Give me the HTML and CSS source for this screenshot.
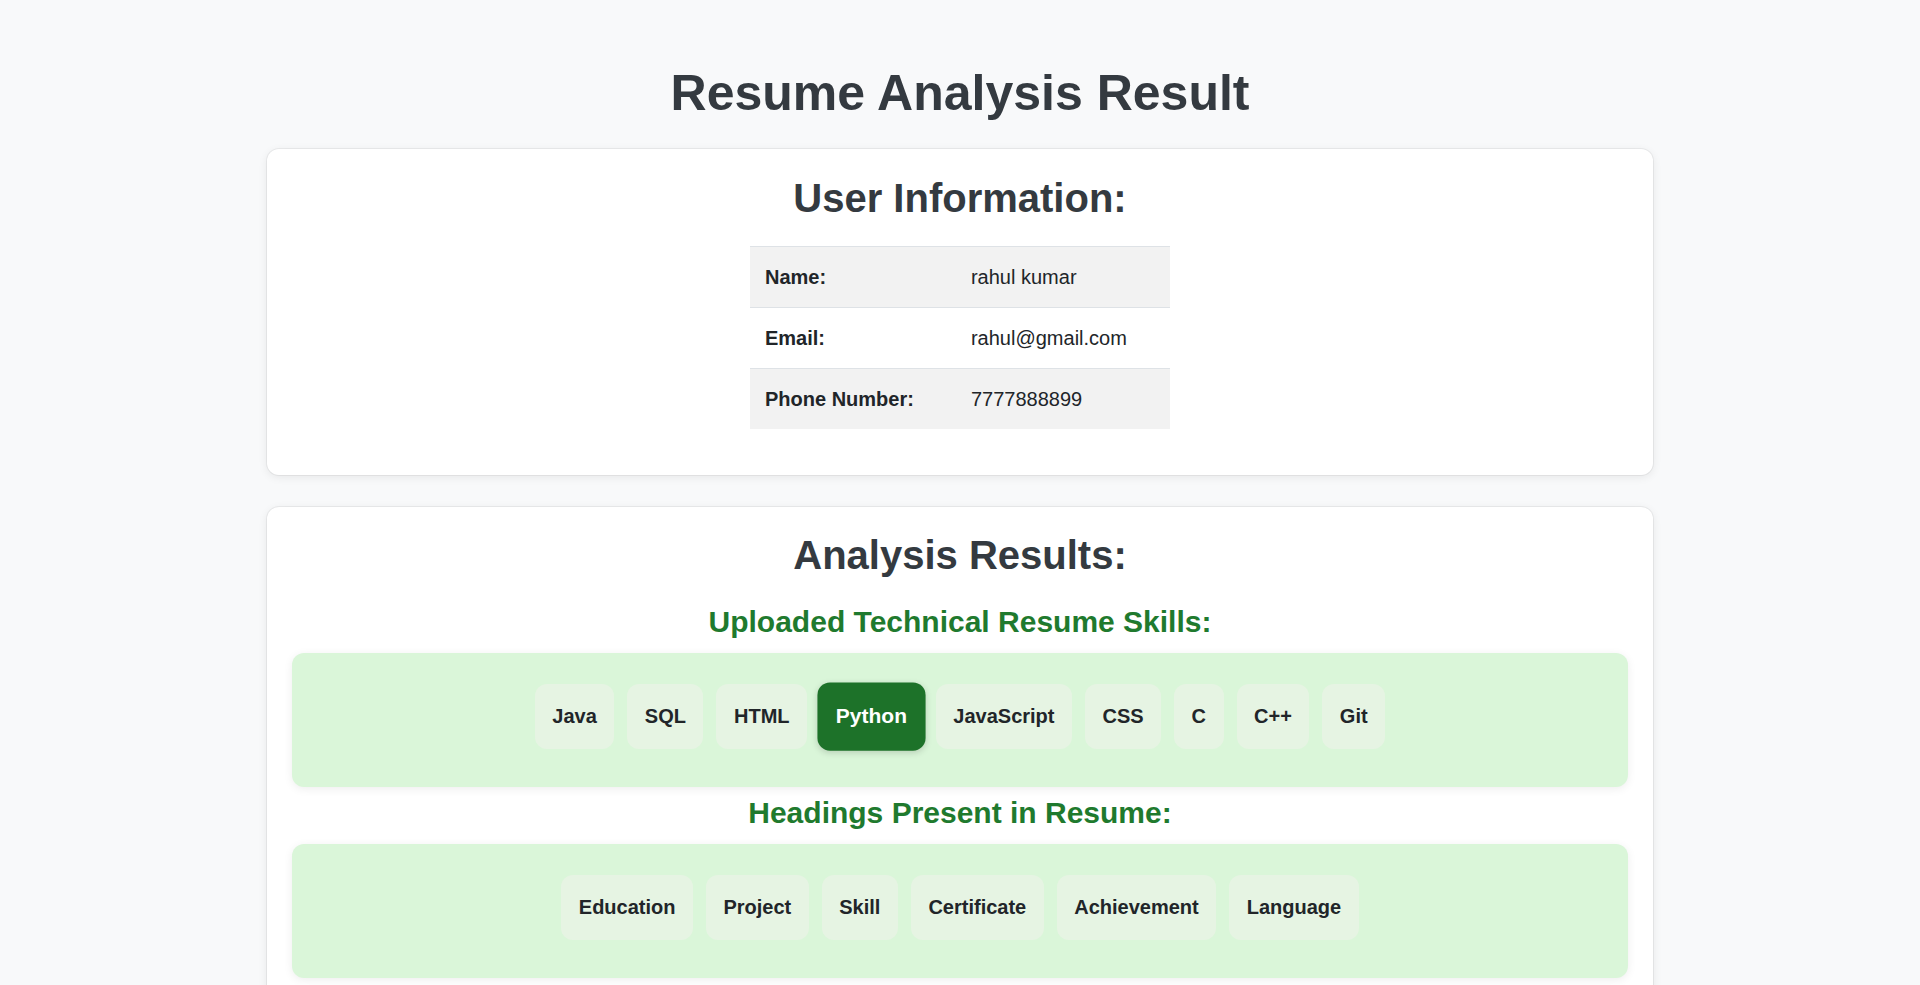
FILE: index.html
```html
<!DOCTYPE html>
<html lang="en">
<head>
<meta charset="utf-8">
<title>Resume Analysis Result</title>
<link rel="stylesheet" href="styles.css">
</head>
<body>
  <h1 class="page-title">Resume Analysis Result</h1>

  <section class="card card-user">
    <h2 class="card-title">User Information:</h2>
    <table class="info-table">
      <tbody>
        <tr class="row-shaded"><th>Name:</th><td>rahul kumar</td></tr>
        <tr><th>Email:</th><td>rahul@gmail.com</td></tr>
        <tr class="row-shaded"><th>Phone Number:</th><td>7777888899</td></tr>
      </tbody>
    </table>
  </section>

  <section class="card card-analysis">
    <h2 class="card-title">Analysis Results:</h2>
    <h3 class="section-title section-first">Uploaded Technical Resume Skills:</h3>
    <div class="chip-box">
      <span class="chip">Java</span>
      <span class="chip">SQL</span>
      <span class="chip">HTML</span>
      <span class="chip chip-active">Python</span>
      <span class="chip">JavaScript</span>
      <span class="chip">CSS</span>
      <span class="chip">C</span>
      <span class="chip">C++</span>
      <span class="chip">Git</span>
    </div>
    <h3 class="section-title">Headings Present in Resume:</h3>
    <div class="chip-box">
      <span class="chip">Education</span>
      <span class="chip">Project</span>
      <span class="chip">Skill</span>
      <span class="chip">Certificate</span>
      <span class="chip">Achievement</span>
      <span class="chip">Language</span>
    </div>
  </section>
</body>
</html>
```
FILE: styles.css
```css
* {
  box-sizing: border-box;
}

body {
  margin: 0;
  background: #f8f9fa;
  font-family: "Liberation Sans", Arial, Helvetica, sans-serif;
  font-size: 20px;
  color: #212529;
}

.page-title {
  margin: 64px 0 27px;
  text-align: center;
  font-size: 50px;
  font-weight: bold;
  color: #343a40;
  line-height: normal;
}

.card {
  width: 1386px;
  margin: 0 auto 31.5px;
  background: #ffffff;
  border-radius: 12px;
  padding: 26.5px 25px 46px;
  box-shadow: 0 0 0 1px rgba(0, 0, 0, 0.05), 0 2px 10px rgba(0, 0, 0, 0.08);
}

.card-title {
  margin: 0 0 25.7px;
  text-align: center;
  font-size: 40px;
  font-weight: bold;
  color: #343a40;
  line-height: normal;
}

.card-analysis .card-title {
  margin-bottom: 27px;
}

.info-table {
  width: 420px;
  margin: 0 auto;
  border-collapse: collapse;
}

.info-table tr {
  border-top: 1px solid #dee2e6;
}

.info-table th,
.info-table td {
  padding: 15px;
  line-height: 30px;
  text-align: left;
  font-size: 20px;
  color: #212529;
}

.info-table th {
  font-weight: bold;
}

.info-table td {
  font-weight: normal;
}

.row-shaded {
  background: #f2f2f2;
}

.section-title {
  margin: 9.7px 0 13.5px;
  text-align: center;
  font-size: 30px;
  font-weight: bold;
  color: #1f7a2e;
  line-height: normal;
}

.section-first {
  margin-top: 0;
}

.chip-box {
  display: flex;
  flex-wrap: wrap;
  justify-content: center;
  gap: 13px;
  min-height: 134px;
  padding: 31.5px 25px 38px;
  background: #daf6d9;
  border-radius: 12px;
  box-shadow: 0 2px 10px rgba(0, 0, 0, 0.07);
}

.chip {
  display: block;
  padding: 20px 17.5px;
  line-height: 24.5px;
  font-size: 20px;
  font-weight: bold;
  color: #212529;
  background: #e6f4e3;
  border-radius: 12px;
}

.chip-active {
  background: #1d7229;
  color: #ffffff;
  transform: scale(1.05);
  box-shadow: 0 2px 6px rgba(0, 0, 0, 0.15);
}
```
